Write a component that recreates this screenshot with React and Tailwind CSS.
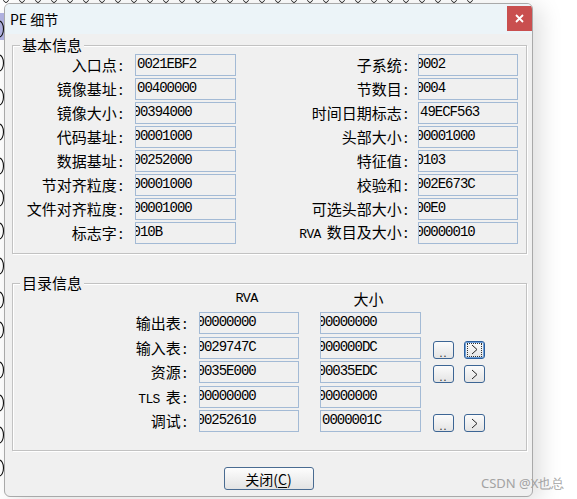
import React from "react";

const CJK = "font-['Noto_Sans_CJK_SC','Noto_Sans',sans-serif]";
const MONO = "font-['Liberation_Mono',monospace]";

function Field({ v, clip, w }) {
  return (
    <div className={`${w} h-[22px] shrink-0 overflow-hidden border border-[#a3bad5] bg-[#f0f0f0]`}>
      <div className={`${clip ? "ml-[-3.5px]" : "ml-[1px]"} whitespace-nowrap ${MONO} text-[14px] leading-[19px] tracking-[-1px] text-black`}>
        {v}
      </div>
    </div>
  );
}

function Label({ text, w }) {
  const parts = text.split(" ");
  return (
    <div className={`${w} shrink-0 whitespace-nowrap text-right text-[15px] leading-[22px] text-black ${CJK}`}>
      {parts.length > 1 ? (
        <>
          <span className={`${MONO} text-[13px] tracking-[-0.6px]`}>{parts[0]}</span>
          <span className="inline-block w-[6px]"></span>
          {parts[1]}
        </>
      ) : (
        text
      )}
      <span className="ml-[2px]">:</span>
    </div>
  );
}

function Group({ title, children, className }) {
  return (
    <div className={`relative ml-[7px] w-[515px] border border-[#c2c2c2] shadow-[inset_1px_1px_0_#ffffff,1px_1px_0_#ffffff] ${className}`}>
      <div className={`absolute left-[7px] top-[-11px] bg-[#f0f0f0] px-[2px] text-[15px] leading-[20px] text-black ${CJK}`}>
        {title}
      </div>
      {children}
    </div>
  );
}

function SmallBtn({ kind, focus }) {
  return (
    <div
      className={`flex h-[18px] w-[21px] shrink-0 items-center justify-center rounded-[3px] border bg-gradient-to-b from-[#fbfbfb] to-[#e4e4e4] ${
        focus ? "border-[#2a5d9c] shadow-[inset_0_0_0_1px_#6d9fd8]" : "border-[#3c6594]"
      }`}
    >
      {kind === "dots" ? (
        <span className="mt-[6px] text-[11px] leading-[10px] tracking-[1px] text-[#333]">..</span>
      ) : (
        <span
          className={`flex h-[12px] w-[13px] items-center justify-center ${
            focus ? "outline outline-1 outline-dotted outline-[#333]" : ""
          }`}
        >
          <svg width="7" height="11" viewBox="0 0 7 11">
            <path d="M1 1 L6 5.5 L1 10" fill="none" stroke="#222" strokeWidth="1" />
          </svg>
        </span>
      )}
    </div>
  );
}

const basicRows = [
  ["入口点", "0021EBF2", false, "子系统", "0002", true],
  ["镜像基址", "00400000", false, "节数目", "0004", true],
  ["镜像大小", "00394000", true, "时间日期标志", "49ECF563", false],
  ["代码基址", "00001000", true, "头部大小", "00001000", true],
  ["数据基址", "00252000", true, "特征值", "0103", true],
  ["节对齐粒度", "00001000", true, "校验和", "002E673C", true],
  ["文件对齐粒度", "00001000", true, "可选头部大小", "00E0", true],
  ["标志字", "010B", true, "RVA 数目及大小", "00000010", true],
];

const dirRows = [
  ["输出表", "00000000", "00000000", true, true],
  ["输入表", "0029747C", "000000DC", true, true],
  ["资源", "0035E000", "00035EDC", true, true],
  ["TLS 表", "00000000", "00000000", true, true],
  ["调试", "00252610", "0000001C", true, false],
];

function Backdrop() {
  const ys = [29, 63, 97, 132, 166, 198, 231, 266, 300, 330, 370, 403, 435, 468];
  const xs = [];
  for (let x = 6; x < 480; x += 16) xs.push(x);
  return (
    <svg className="absolute left-0 top-0" width="577" height="499" viewBox="0 0 577 499">
      <rect x="0" y="13" width="5" height="27" fill="#b3b4e3" />
      {ys.map((y) => (
        <ellipse key={y} cx="-1" cy={y} rx="4.5" ry="8" fill="none" stroke="#111" strokeWidth="1.1" />
      ))}
      {xs.map((x) => (
        <ellipse key={x} cx={x} cy="-5" rx="3.5" ry="7.5" fill="none" stroke="#222" strokeWidth="1" />
      ))}
    </svg>
  );
}

export default function App() {
  return (
    <div className="relative h-[499px] w-[577px] overflow-hidden bg-white">
      <Backdrop />
      <div className="absolute left-[4px] top-[3px] flex h-[494px] w-[529px] flex-col overflow-hidden rounded-[6px] border border-[#a9a9a9] bg-[#f0f0f0] shadow-[8px_4px_22px_rgba(0,0,0,0.13)]">
        {/* title bar */}
        <div className="flex h-[30px] shrink-0 items-start justify-between bg-[#ecf4f8]">
          <div className={`ml-[5px] mt-[5px] text-[14px] leading-[20px] text-black ${CJK}`}>PE 细节</div>
          <div className="mt-[2px] flex h-[25px] w-[25px] items-center justify-center bg-[#c94f4f]">
            <svg width="9" height="9" viewBox="0 0 9 9">
              <path d="M1 1 L8 8 M8 1 L1 8" stroke="#fff" strokeWidth="1.8" />
            </svg>
          </div>
        </div>

        {/* basic info */}
        <Group title="基本信息" className="mt-[11px] pb-[9px] pt-[8px]">
          <div className="flex flex-col gap-[2px]">
            {basicRows.map((r) => (
              <div key={r[0]} className="flex h-[22px] items-center">
                <Label text={r[0]} w="w-[110px]" />
                <div className="ml-[12px]">
                  <Field v={r[1]} clip={r[2]} w="w-[101px]" />
                </div>
                <Label text={r[3]} w="w-[172px]" />
                <div className="ml-[10px]">
                  <Field v={r[4]} clip={r[5]} w="w-[100px]" />
                </div>
              </div>
            ))}
          </div>
        </Group>

        {/* directory info */}
        <Group title="目录信息" className="mt-[29px] pb-[18px] pt-[5px]">
          <div className="mb-[3px] flex h-[20px] items-center">
            <div className="w-[186px] shrink-0"></div>
            <div className={`w-[100px] shrink-0 pr-[5px] text-center text-[13.5px] leading-[20px] tracking-[-0.7px] text-black ${MONO}`}>RVA</div>
            <div className="w-[21px] shrink-0"></div>
            <div className={`w-[101px] shrink-0 pr-[4px] text-center text-[15px] leading-[20px] text-black ${CJK}`}>大小</div>
          </div>
          <div className="flex flex-col gap-[2.5px]">
            {dirRows.map((r) => (
              <div key={r[0]} className="flex h-[22px] items-start">
                <Label text={r[0]} w="w-[174px]" />
                <div className="ml-[12px]">
                  <Field v={r[1]} clip={r[3]} w="w-[100px]" />
                </div>
                <div className="ml-[21px]">
                  <Field v={r[2]} clip={r[4]} w="w-[101px]" />
                </div>
                {r[0] !== "输出表" && r[0] !== "TLS 表" && (
                  <div className="ml-[12px] mt-[4px] flex gap-[10px]">
                    <SmallBtn kind="dots" />
                    <SmallBtn kind="arrow" focus={r[0] === "输入表"} />
                  </div>
                )}
              </div>
            ))}
          </div>
        </Group>

        {/* close */}
        <div className="mt-[16px] flex justify-center">
          <div className={`flex h-[23px] w-[90px] items-center justify-center rounded-[3px] border border-[#496b91] bg-gradient-to-b from-[#fdfdfd] to-[#e3e3e3] text-[14px] leading-[20px] text-black ${CJK}`}>
            关闭(<span className="underline underline-offset-2">C</span>)
          </div>
        </div>
      </div>

      <div className={`absolute left-[481px] top-[474px] whitespace-nowrap text-[13px] leading-[18px] text-[#a3a3a3] font-['Noto_Sans',sans-serif]`}>
        CSDN @X也总
      </div>
    </div>
  );
}
